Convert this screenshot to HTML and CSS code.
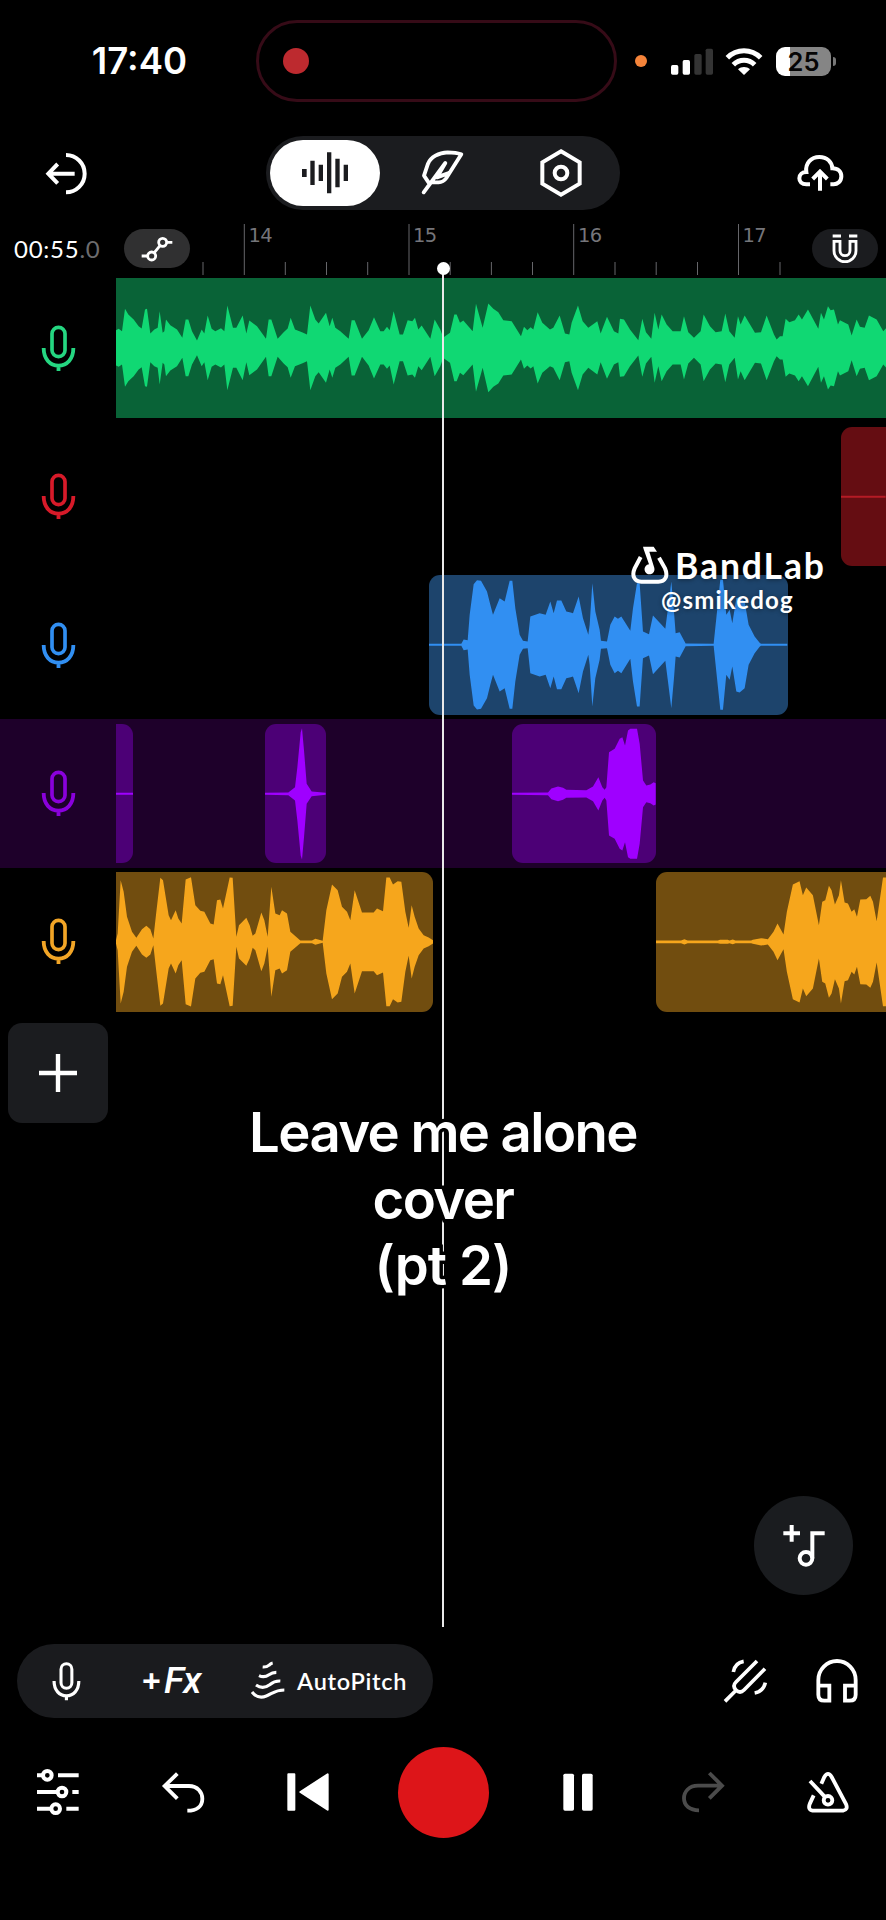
FILE: index.html
```
<!DOCTYPE html>
<html lang="en">
<head>
<meta charset="utf-8">
<title>Studio</title>
<link rel="stylesheet" href="styles.css">
</head>
<body>
<svg class="defs" width="0" height="0">
  <symbol id="mic" viewBox="118 192 110 146">
    <rect x="154" y="202" width="39" height="88" rx="19.5" fill="none" stroke="currentColor" stroke-width="11"/>
    <path d="M129 264C129 297 148 317 173.500 317S218 297 218 264M173.500 317V333" fill="none" stroke="currentColor" stroke-width="11.500"/>
  </symbol>
</svg>
<div class="screen">
  <header class="status">
    <div class="clock">17:40</div>
    <div class="island"><i></i></div>
    <i class="mic-dot"></i>
    <svg class="signal" width="43" height="27" viewBox="684 138 129 81">
      <g fill="#fff"><rect x="684" y="189" width="22" height="29" rx="5"/><rect x="719" y="174" width="22" height="44" rx="5"/></g>
      <g fill="#343434"><rect x="754" y="156" width="22" height="62" rx="5"/><rect x="788" y="140" width="22" height="78" rx="5"/></g>
    </svg>
    <svg class="wifi" width="38" height="29" viewBox="845 134 114 87" fill="none" stroke="#fff" stroke-width="15">
      <path d="M852 166C880 138 924 138 952 166M870 187C888 169 916 169 934 187"/>
      <path d="M884 201C894 192 910 192 920 201L902 218Z" fill="#fff" stroke="none"/>
    </svg>
    <div class="battery"><span>25</span></div><i class="nub"></i>
  </header>

  <nav class="toolbar">
    <svg class="back" width="47" height="47" viewBox="129 449 141 141" fill="none" stroke="#fff" stroke-width="12">
      <path d="M198 464A56 56 0 0 1 198 576M224 520H146M173 491L145 520L173 549"/>
    </svg>
    <div class="views">
      <div class="view active">
        <svg width="48" height="44" viewBox="903 454 144 132" fill="#1b1c1f">
          <path d="M906 508h14v24h-14zM931 483h13v73h-13zM956 495h13v49h-13zM981 458h13v123h-13zM1006 477h13v86h-13zM1031 495h13v49h-13z"/>
        </svg>
      </div>
      <div class="view">
        <svg width="46" height="48" viewBox="1262 446 138 144" fill="none" stroke="#fff" stroke-width="11.500" stroke-linejoin="round" stroke-linecap="round">
          <path d="M1273 576L1338 488L1313 531L1346 519M1288 547L1274 526L1286 490C1294 470 1318 457 1345 456Q1370 456 1386 462L1341 533Q1332 546 1318 546H1294"/>
        </svg>
      </div>
      <div class="view">
        <svg width="46" height="50" viewBox="286 445 138 150" fill="none" stroke="#fff" stroke-width="12">
          <path d="M355 455L411 488V552L355 585L299 552V488Z"/><circle cx="355" cy="520" r="19"/>
        </svg>
      </div>
    </div>
    <svg class="cloud" width="48" height="38" viewBox="1059 460 144 114" fill="none" stroke="#fff" stroke-width="12">
      <path d="M1101 551H1090C1076 551 1069 543 1069 533C1069 521 1078 514 1090 514C1086 487 1105 469 1129 469C1153 469 1167 485 1168 503C1185 503 1195 513 1195 527C1195 543 1183 551 1172 551H1162M1131 570V513M1109 535L1131 513L1153 535"/>
    </svg>
  </nav>

  <section class="ruler">
    <div class="time">00:55<span>.0</span></div>
    <div class="chip auto">
      <svg width="32" height="26" viewBox="422 708 96 78" fill="none" stroke="#fff" stroke-width="8.500">
        <circle cx="487" cy="727" r="12"/><circle cx="454" cy="768" r="12"/>
        <path d="M424 768H442M499 727H516M462 758L479 737"/>
      </svg>
    </div>
    <svg class="ticks" width="620" height="54" viewBox="192 222 620 54">
      <path d="M244.300 224V275M409 224V275M573.700 224V275M738.500 224V275" stroke="#66666a"/>
      <path d="M203 262v13M285.300 262v13M326.500 262v13M367.700 262v13M450.200 262v13M491.400 262v13M532.500 262v13M615 262v13M656.200 262v13M697.500 262v13M780 262v13" stroke="#66666a"/>
      <g class="bar-no"><text x="248.500" y="241.500">14</text><text x="413" y="241.500">15</text><text x="578" y="241.500">16</text><text x="742.500" y="241.500">17</text></g>
    </svg>
    <div class="chip snap">
      <svg width="28" height="32" viewBox="1164 703 84 96" fill="none" stroke="#fff" stroke-width="8.500">
        <path d="M1173 728V756A33 33 0 0 0 1239 756V728H1221V756A15 15 0 0 1 1191 756V728ZM1169 712H1194M1218 712H1243"/>
      </svg>
    </div>
  </section>

  <main class="tracks">
    <div class="track green"><div class="head"><svg class="mic"><use href="#mic"/></svg></div>
      <div class="lane"><div class="clip open-l open-r" data-wave="green" style="width:770.300px"></div></div></div>
    <div class="track red"><div class="head"><svg class="mic"><use href="#mic"/></svg></div>
      <div class="lane"><div class="clip open-r" data-wave="red" style="margin-left:725.700px;width:44.600px"></div></div></div>
    <div class="track blue"><div class="head"><svg class="mic"><use href="#mic"/></svg></div>
      <div class="lane"><div class="clip" data-wave="blue" style="margin-left:313.600px;width:358.300px"></div></div></div>
    <div class="track purple"><div class="head"><svg class="mic"><use href="#mic"/></svg></div>
      <div class="lane"><div class="clip open-l" data-wave="purple1" style="width:17px"></div><div class="clip" data-wave="purple2" style="margin-left:132.300px;width:60.700px"></div><div class="clip" data-wave="purple3" style="margin-left:186.300px;width:143.700px"></div></div></div>
    <div class="track orange"><div class="head"><svg class="mic"><use href="#mic"/></svg></div>
      <div class="lane"><div class="clip open-l" data-wave="orange1" style="width:317px"></div><div class="clip open-r" data-wave="orange2" style="margin-left:223.300px;width:230px"></div></div></div>
  </main>

  <section class="workspace">
    <div class="add"><svg width="38" height="38" viewBox="0 0 38 38"><path d="M0 19H38M19 0V38" stroke="#fff" stroke-width="4.400"/></svg></div>
    <div class="fab">
      <svg width="44" height="44" viewBox="1016 160 132 132" fill="none" stroke="#fff" stroke-width="12">
        <path d="M1020 188H1070M1045 163V213M1107 263V188H1144"/><circle cx="1088" cy="263" r="19"/>
      </svg>
    </div>
  </section>

  <section class="effects">
    <div class="fx-pill">
      <svg class="mic small"><use href="#mic"/></svg>
      <div class="fx"><b>+</b><em>Fx</em></div>
      <svg class="pitch" width="36" height="40" viewBox="749 124 108 120" fill="none" stroke="#fff" stroke-width="9.500">
        <path d="M755 217C767 232 783 235 798 229C817 221 825 211 852 211M767 196C783 207 796 204 808 195C818 187 826 183 840 184M776 168C789 174 798 171 806 165C813 160 818 158 828 158M787 142C800 143 802 140 808 135C812 131 812 131 817 130"/>
      </svg>
      <span class="pitch-label">AutoPitch</span>
    </div>
    <svg class="fork" width="46" height="46" viewBox="838 567 138 138" fill="none" stroke="#fff" stroke-width="11">
      <path d="M847 697L881 663M943 576L880 639Q868 651 880 663Q892 675 904 663L967 599M872 609C875 592 885 580 903 577M936 672C953 669 964 658 968 641"/>
    </svg>
    <svg class="phones" width="46" height="46" viewBox="1112 562 138 138" fill="none" stroke="#fff" stroke-width="11.500">
      <path d="M1125 647V628A56 57 0 0 1 1237 628V647M1125 645H1158V690H1143Q1125 690 1125 672ZM1237 645H1205V690H1219Q1237 690 1237 672Z"/>
    </svg>
  </section>

  <footer class="transport">
    <svg width="46" height="50" viewBox="105 442 138 150" fill="none" stroke="#fff" stroke-width="12">
      <path d="M111 467H130M174 467H236M111 517H172M217 517H236M111 567H154M199 567H236"/><circle cx="142" cy="467" r="13"/><circle cx="186" cy="517" r="13"/><circle cx="167" cy="567" r="13"/>
    </svg>
    <svg width="46" height="50" viewBox="479 442 138 150" fill="none" stroke="#fff" stroke-width="11.500">
      <path d="M531 462L493 499L531 537M493 499H566C592 499 606 518 606 537C606 559 590 573 561 573"/>
    </svg>
    <svg width="46" height="50" viewBox="857 442 138 150" fill="#fff" stroke="#fff" stroke-width="6" stroke-linejoin="round">
      <path d="M867 464H885V570H867ZM985 464V570L903 517Z"/>
    </svg>
    <i class="record"></i>
    <svg width="46" height="50" viewBox="335 892 138 150" fill="#fff"><rect x="360" y="912" width="32" height="111" rx="5"/><rect x="416" y="912" width="32" height="111" rx="5"/></svg>
    <svg width="46" height="50" viewBox="713 892 138 150" fill="none" stroke="#4b4b4b" stroke-width="11.500">
      <path d="M801 910L839 948L801 986M839 948H767C740 948 725 966 725 986C725 1008 742 1022 770 1022"/>
    </svg>
    <svg width="46" height="50" viewBox="1088 892 138 150" fill="none" stroke="#fff" stroke-width="11.500">
      <path d="M1137 942L1146 922Q1157 903 1168 922L1211 1003Q1218 1020 1202 1023H1111Q1095 1020 1103 1001L1114 977M1103 934L1147 981"/><circle cx="1157" cy="992" r="13"/>
    </svg>
  </footer>

  <div class="playhead"></div>
  <div class="watermark">
    <div class="brand">
      <svg width="40" height="40" viewBox="688 43 120 120">
        <path d="M720 79L702 113C692 136 702 153 722 153H773C794 153 803 136 793 113L775 81" fill="none" stroke="#fff" stroke-width="12"/>
        <path d="M727 48H759L769 63H746L761 112A15 15 0 1 1 745 101L729 56Z" fill="#fff"/>
      </svg>
      <span>BandLab</span>
    </div>
    <div class="handle">@smikedog</div>
  </div>
  <div class="caption"><p class="l1">Leave me alone</p><p class="l2">cover</p><p class="l3">(pt 2)</p></div>
</div>
<script src="waves.js"></script>
</body>
</html>
```
FILE: styles.css
```
* { box-sizing: border-box; }
body { margin: 0; background: #000; color: #fff; font-family: Lato, "Open Sans", sans-serif; }
svg { display: block; flex: none; }
i { display: block; flex: none; }
.defs { position: absolute; }
.screen { position: relative; width: 886px; height: 1920px; overflow: hidden; display: flex; flex-direction: column; background: #000; }

.status { display: flex; align-items: center; height: 82px; margin-top: 20px; flex: none; }
.clock { width: 256px; padding-left: 23px; text-align: center; font: 600 36.500px/1 Inter, sans-serif; }
.island { width: 361px; height: 82px; border: 3px solid #360b17; border-radius: 41px; padding: 25px 24px; }
.island i { width: 26px; height: 26px; border-radius: 50%; background: #bd2a2f; }
.mic-dot { width: 12px; height: 12px; border-radius: 50%; background: #f5843a; margin-left: 18px; }
.signal { margin-left: 24px; }
.wifi { margin-left: 11px; }
.battery { margin-left: 13px; width: 55px; height: 29px; border-radius: 9px; background: linear-gradient(90deg, #fff 14px, #858585 14px); color: #050505; font: 600 25.500px/29px Inter, sans-serif; text-align: center; }
.nub { width: 3px; height: 9px; margin-left: 2px; border-radius: 0 4px 4px 0; background: #777; }

.toolbar { display: flex; align-items: center; height: 74px; margin-top: 34px; flex: none; }
.back { margin-left: 43px; }
.views { display: flex; align-items: center; width: 354px; height: 74px; margin-left: 176px; padding: 4px; border-radius: 37px; background: #1b1c1f; }
.view { width: 110px; height: 66px; display: flex; align-items: center; justify-content: center; border-radius: 33px; }
.view + .view { margin-left: 8px; }
.view.active { background: #fff; }
.cloud { margin-left: 176px; }

.ruler { display: flex; height: 64px; flex: none; align-items: flex-start; }
.time { width: 124px; padding: 24px 0 0 14px; font-size: 24px; line-height: 30px; letter-spacing: .75px; white-space: nowrap; }
.time span { color: #6c6c6e; }
.chip { width: 66px; height: 39px; margin-top: 19px; border-radius: 20px; display: flex; align-items: center; justify-content: center; flex: none; }
.auto { background: #303031; }
.snap { background: #1b1c1f; }
.ticks { margin: 12px 0 0 2px; }
.bar-no text { fill: #75757a; font: 19.500px "DejaVu Sans", sans-serif; letter-spacing: -.6px; }

.tracks { flex: none; }
.track { display: flex; height: 148.400px; }
.head { width: 115.700px; flex: none; display: flex; align-items: center; justify-content: center; }
.mic { width: 36.700px; height: 48.700px; }
.lane { display: flex; align-items: center; flex: 1; min-width: 0; overflow: hidden; }
.clip { height: 139.700px; flex: none; border-radius: 11px; overflow: hidden; }
.clip svg { width: 100%; height: 100%; }
.open-l { border-top-left-radius: 0; border-bottom-left-radius: 0; }
.open-r { border-top-right-radius: 0; border-bottom-right-radius: 0; }
.green { color: #25d681; } .green .clip { background: #096337; color: #10d873; }
.red { color: #d71a29; } .red .clip { background: #650d12; color: #b51b25; }
.blue { color: #318ff2; } .blue .clip { background: #1d446c; }
.purple { color: #8a00dc; background: #1e002a; } .purple .clip { background: #4c0076; color: #9f00ff; }
.orange { color: #f2a526; } .orange .clip { background: #714d0f; color: #f6a61c; }

.workspace { flex: 1; display: flex; flex-direction: column; justify-content: space-between; padding: 7px 0 49px 8px; }
.add { width: 100px; height: 100px; border-radius: 14px; background: #1b1c1f; display: flex; align-items: center; justify-content: center; }
.fab { width: 99px; height: 99px; border-radius: 50%; background: #1a1c1f; margin-left: 746px; display: flex; align-items: center; justify-content: center; }

.effects { display: flex; align-items: center; height: 74px; flex: none; }
.fx-pill { width: 416px; height: 74px; margin-left: 17px; border-radius: 37px; background: #1a1b1e; display: flex; align-items: center; }
.mic.small { width: 30.600px; height: 40.600px; margin-left: 33.500px; }
.fx { display: flex; align-items: center; width: 60px; margin-left: 61px; white-space: nowrap; }
.fx b { font: 700 33px/36px "Open Sans", sans-serif; width: 21px; flex: none; }
.fx em { font: italic 500 37.500px/40px Roboto, sans-serif; letter-spacing: -1px; margin: -3px 0 0 1px; }
.pitch { margin-left: 48px; }
.pitch-label { margin-left: 11px; font-size: 23.500px; font-weight: 600; letter-spacing: .7px; white-space: nowrap; }
.fork { margin-left: 289px; }
.phones { margin-left: 46px; }

.transport { display: flex; align-items: center; justify-content: space-between; height: 92px; margin: 28px 34.500px 82px 35px; flex: none; }
.record { width: 91px; height: 91px; border-radius: 50%; background: #dd1519; margin: 0 -12.500px; }

.playhead { position: absolute; left: 442px; top: 268px; width: 2px; height: 1359px; background: #e9e9e9; }
.playhead::before { content: ""; position: absolute; left: -5px; top: -6px; width: 13px; height: 13px; border-radius: 50%; background: #fff; }

.watermark { position: absolute; left: 630px; top: 544px; text-shadow: 0 1px 4px rgba(0,0,0,.4); }
.brand { display: flex; align-items: center; height: 42px; font-size: 35.500px; font-weight: 700; letter-spacing: 1.900px; white-space: nowrap; }
.brand span { margin-left: 5px; }
.handle { margin: 0 0 0 31px; font-size: 24px; line-height: 28px; font-weight: 700; letter-spacing: 1.200px; }

.caption { position: absolute; left: 0; top: 1099px; width: 886px; text-align: center; font: 600 54.500px/66.500px Inter, sans-serif; letter-spacing: -1.600px; -webkit-text-stroke: 7px #000; paint-order: stroke fill; }
.caption p { margin: 0; }
.caption .l3 { letter-spacing: -.9px; }
```
FILE: waves.js
```
// Half-height envelopes: pairs of x, amplitude. Each is mirrored about the clip's centre line.
const level = (base, pts) => pts.map((v, i) => (i % 2 ? base - v : v));
const waves = {
  green: { from: 347, to: 2658, pts: level(265, [
    347,212,355,208,365,215,374,148,384,165,400,180,415,200,424,207,434,150,440,148,450,222,462,210,472,205,478,155,487,220,492,215,497,180,510,197,530,210,546,235,556,180,564,180,575,215,590,243,604,210,612,222,622,168,634,208,645,215,662,206,672,215,681,138,698,205,708,205,727,168,738,222,747,183,770,200,797,238,805,180,813,180,832,238,850,218,862,207,871,175,884,210,905,218,920,225,930,138,945,180,955,192,977,160,988,200,996,175,1005,205,1020,215,1045,238,1054,182,1063,182,1085,238,1105,212,1121,173,1140,215,1150,215,1160,202,1168,212,1180,155,1198,225,1208,225,1222,182,1236,185,1244,175,1254,210,1264,198,1290,238,1303,180,1320,210,1329,235,
    1332,232,1349,220,1362,165,1369,165,1379,190,1389,183,1417,215,1427,133,1447,205,1464,132,1479,148,1494,158,1509,182,1534,185,1562,230,1571,202,1581,212,1591,203,1599,210,1612,158,1626,190,1649,210,1659,205,1678,168,1694,222,1707,225,1714,190,1733,138,1747,185,1764,205,1791,185,1801,222,1820,172,1841,215,1854,222,1859,178,1871,180,1889,210,1914,242,1926,178,1937,218,1953,238,1963,160,1974,210,1984,165,1999,195,2017,215,2041,215,2051,170,2064,218,2081,235,2101,215,2110,165,2129,200,2146,218,2164,215,2175,162,2187,215,2203,235,2213,170,2221,195,2233,168,2264,220,2282,218,2299,168,2321,225,2329,240,2339,230,2347,230,2356,178,2367,188,2384,182,2395,165,2405,180,2423,150,2454,208,2462,160,2471,180,2483,140,2491,152,2501,150,2513,195,2519,182,2544,195,2554,228,2569,180,2579,202,2593,205,2606,168,2629,180,2649,215,2658,205]) },
  red: { from: 0, to: 134, pts: [0,3,134,3] },
  blue: { from: 88, to: 1163, pts: [88,3,185,3,192,16,204,14,210,90,222,182,232,194,244,192,262,160,272,120,280,90,300,140,315,130,330,192,338,192,347,110,360,30,370,12,384,10,392,85,420,95,438,90,452,130,462,95,472,133,485,133,500,100,513,97,520,95,537,145,550,80,566,30,570,60,578,185,587,100,600,45,604,12,622,10,632,60,645,85,655,78,665,85,692,42,700,110,712,185,720,185,730,40,748,32,760,88,797,48,805,110,815,190,823,100,828,35,840,38,858,4,942,3,950,80,962,195,970,195,980,90,990,105,998,65,1010,140,1020,143,1035,130,1047,60,1065,25,1080,6,1084,3,1163,3] },
  purple1: { from: 347, to: 398, pts: [347,3,398,3] },
  purple2: { from: 795, to: 977, pts: [795,3,865,4,885,20,892,80,902,185,906,197,912,130,920,30,935,7,977,3] },
  purple3: { from: 207, to: 638, pts: [207,3,315,4,325,16,345,22,360,18,370,12,430,11,450,22,466,50,478,20,485,12,490,20,498,125,515,135,530,165,538,170,546,145,555,190,562,195,582,195,590,150,600,40,610,25,622,28,632,35,638,32] },
  orange1: { from: 347, to: 1298, pts: [347,5,352,25,361,185,370,150,380,75,395,30,408,12,425,38,438,48,450,38,459,10,468,90,480,192,488,185,505,80,512,65,526,95,534,70,544,55,556,187,572,194,585,110,600,93,612,90,630,55,640,52,650,125,660,127,668,100,688,193,697,192,708,15,716,50,738,72,748,50,757,18,765,25,783,88,792,65,802,15,813,165,825,85,838,80,845,95,860,85,870,30,900,4,935,4,945,9,967,3,978,95,995,172,1012,155,1025,105,1040,90,1050,65,1063,155,1085,88,1105,88,1120,88,1130,100,1148,92,1158,193,1168,193,1178,172,1192,182,1203,180,1215,90,1225,42,1234,110,1243,75,1255,40,1270,20,1285,13,1298,5] },
  orange2: { from: 640, to: 1329, pts: [640,4,715,4,725,8,735,4,825,4,832,6,855,6,860,4,870,7,878,4,925,4,930,6,955,11,975,8,992,30,1004,55,1022,22,1032,90,1050,172,1070,182,1080,140,1090,163,1110,140,1128,50,1138,120,1147,125,1158,168,1166,155,1176,112,1188,140,1194,185,1205,118,1215,115,1226,90,1234,98,1242,75,1252,127,1270,128,1282,138,1290,120,1301,62,1320,193,1329,193] }
};

document.querySelectorAll("[data-wave]").forEach((clip) => {
  const { from, to, pts } = waves[clip.dataset.wave];
  const top = [], bottom = [];
  for (let i = 0; i < pts.length; i += 2) {
    top.push(pts[i] + "," + -pts[i + 1]);
    bottom.unshift(pts[i] + "," + pts[i + 1]);
  }
  clip.innerHTML = `<svg viewBox="${from} -209.500 ${to - from} 419" preserveAspectRatio="none"><polygon fill="currentColor" points="${top.concat(bottom).join(" ")}"/></svg>`;
});
```
